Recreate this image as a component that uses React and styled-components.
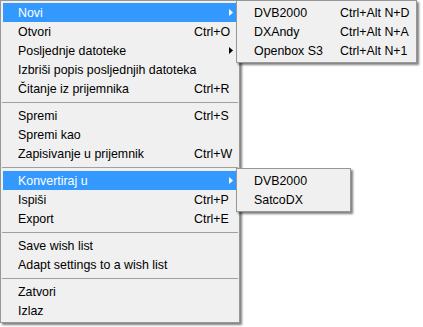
import React from 'react'
import styled, { createGlobalStyle } from 'styled-components'

const GlobalStyle = createGlobalStyle`
    html, body {
        margin: 0;
        padding: 0;
        background: #ffffff;
    }
    body {
        font-family: "Liberation Sans", Arial, sans-serif;
        font-size: 12.4px;
        color: #000000;
    }
`;

const fileMenu = [
    { label: 'Novi', sub: 'new', active: true },
    { label: 'Otvori', shortcut: 'Ctrl+O' },
    { label: 'Posljednje datoteke', sub: 'recent' },
    { label: 'Izbriši popis posljednjih datoteka' },
    { label: 'Čitanje iz prijemnika', shortcut: 'Ctrl+R' },
    { sep: true },
    { label: 'Spremi', shortcut: 'Ctrl+S' },
    { label: 'Spremi kao' },
    { label: 'Zapisivanje u prijemnik', shortcut: 'Ctrl+W' },
    { sep: true },
    { label: 'Konvertiraj u', sub: 'convert', active: true },
    { label: 'Ispiši', shortcut: 'Ctrl+P' },
    { label: 'Export', shortcut: 'Ctrl+E' },
    { sep: true },
    { label: 'Save wish list' },
    { label: 'Adapt settings to a wish list' },
    { sep: true },
    { label: 'Zatvori' },
    { label: 'Izlaz' },
]

const subMenus = {
    new: {
        width: 181,
        shortcutCol: 70,
        items: [
            { label: 'DVB2000', shortcut: 'Ctrl+Alt N+D' },
            { label: 'DXAndy', shortcut: 'Ctrl+Alt N+A' },
            { label: 'Openbox S3', shortcut: 'Ctrl+Alt N+1' },
        ],
    },
    convert: {
        width: 115,
        shortcutCol: 0,
        items: [
            { label: 'DVB2000' },
            { label: 'SatcoDX' },
        ],
    },
}

function Arrow({ active }) {
    return (
        <svg width="4" height="7" viewBox="0 0 4 7">
            <path d="M0 0 L4 3.5 L0 7 Z" fill={active ? '#ffffff' : '#000000'} />
        </svg>
    )
}

function Menu({ items, width, shortcutCol, popup }) {
    return (
        <MenuBox $width={width} $popup={popup}>
            {items.map((item, i) => {
                if (item.sep) return <Separator key={i} />
                const sub = item.sub && item.active ? subMenus[item.sub] : null
                return (
                    <Item key={i} $active={item.active} $col={shortcutCol}>
                        <span>{item.label}</span>
                        {item.shortcut && <Shortcut>{item.shortcut}</Shortcut>}
                        {item.sub && (
                            <ArrowCell>
                                <Arrow active={item.active} />
                            </ArrowCell>
                        )}
                        {sub && (
                            <SubAnchor>
                                <Menu items={sub.items} width={sub.width} shortcutCol={sub.shortcutCol} popup />
                            </SubAnchor>
                        )}
                    </Item>
                )
            })}
        </MenuBox>
    )
}

function App() {
    return (
        <>
            <GlobalStyle />
            <Page>
                <Menu items={fileMenu} width={240} shortcutCol={39} />
            </Page>
        </>
    )
}

const Page = styled.div`
    width: 423px;
    height: 327px;
    overflow: hidden;
`;

const MenuBox = styled.div`
    box-sizing: border-box;
    width: ${p => p.$width}px;
    background: #f0f0f0;
    border: 1px solid #979797;
    padding: 2px;
    box-shadow: 2px 2px 2px rgba(0, 0, 0, 0.5);
    position: ${p => (p.$popup ? 'static' : 'relative')};
`;

const Item = styled.div`
    position: relative;
    box-sizing: border-box;
    height: 19px;
    display: grid;
    grid-template-columns: 1fr ${p => p.$col}px;
    align-items: center;
    padding: 1px 4px 0 15px;
    background: ${p => (p.$active ? '#3399ff' : 'transparent')};
    color: ${p => (p.$active ? '#ffffff' : '#000000')};
    white-space: nowrap;
    line-height: 18px;
`;

const Shortcut = styled.span`
    grid-column: 2;
    grid-row: 1;
`;

const ArrowCell = styled.span`
    grid-column: 2;
    grid-row: 1;
    display: flex;
    justify-content: flex-end;
    align-items: center;
    margin-top: -1px;
`;

const SubAnchor = styled.div`
    position: absolute;
    left: calc(100% - 1px);
    top: -3px;
    z-index: 2;
    color: #000000;
`;

const Separator = styled.div`
    height: 8px;
    display: flex;
    align-items: center;
    margin: 0 -1px;

    &::before {
        content: '';
        flex: 1;
        height: 1px;
        background: #a0a0a0;
    }
`;

export default App
